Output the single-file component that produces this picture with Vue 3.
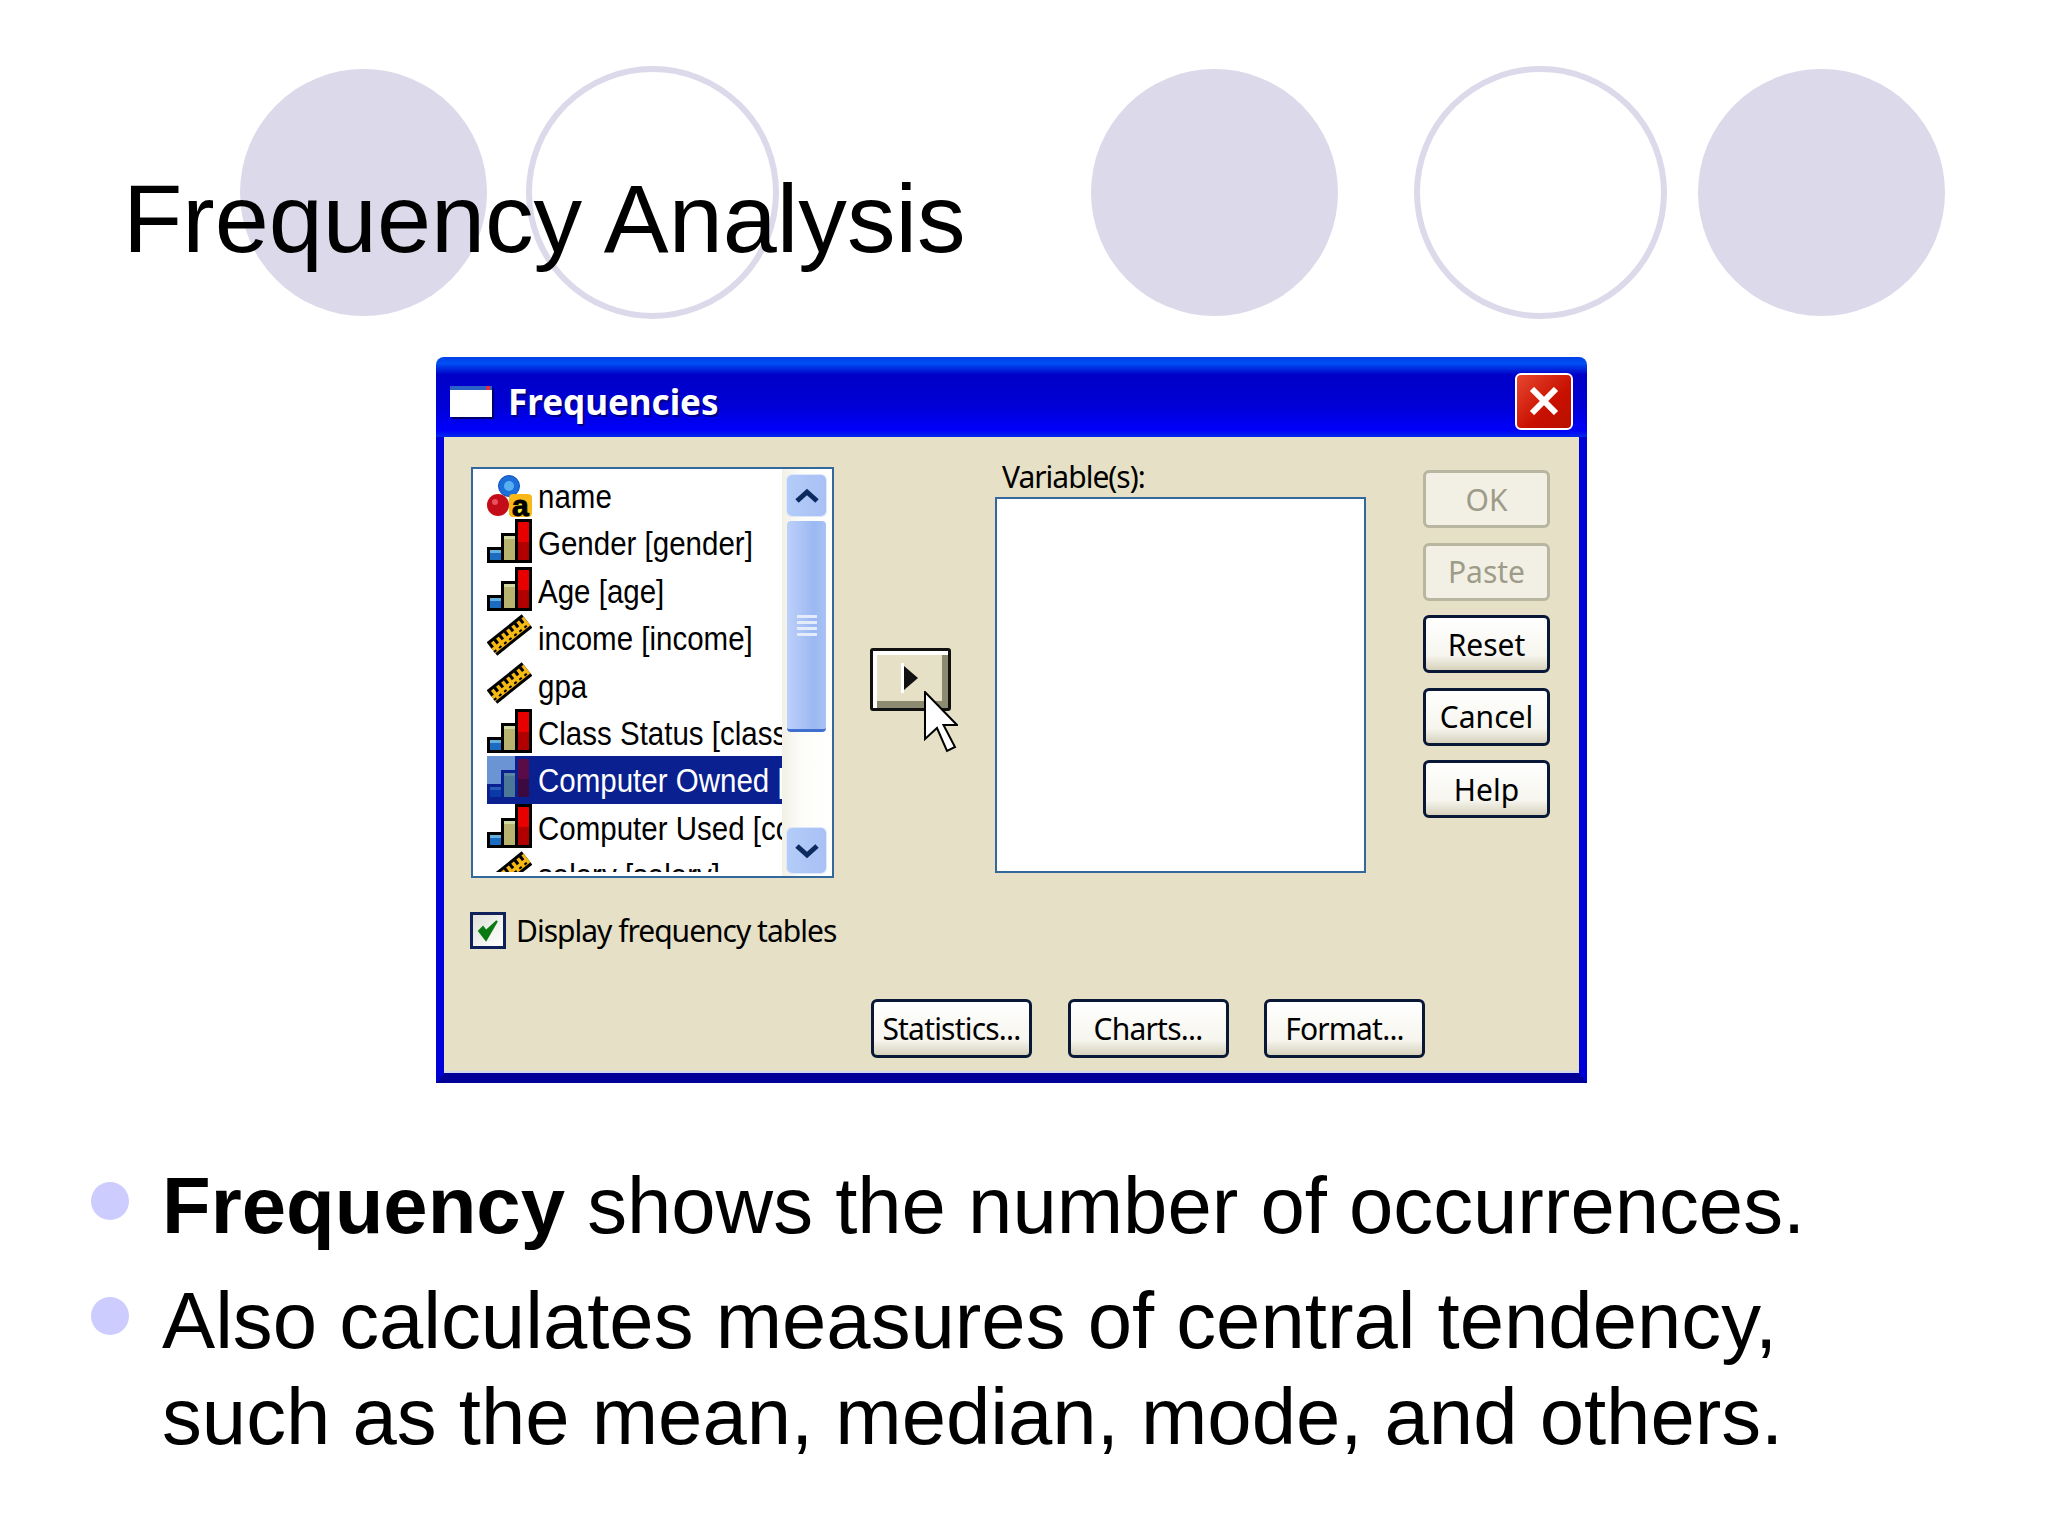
<script setup>
const bar = { outline: '#000', blue: '#1a6cc0', blueTop: '#66b0e0', tan: '#b8b470', tanTop: '#d0d8a0', red: '#e80000', redDark: '#b00000', bg: 'none' }
const barSel = { outline: '#0a1f90', blue: '#0a3aa8', blueTop: '#2a5ab8', tan: '#4a7896', tanTop: '#5a88a0', red: '#5a0c48', redDark: '#3c0a40', bg: '#6a94d4' }
const rows = [
  { id: 1, icon: 'name', label: 'name' },
  { id: 2, icon: 'bar', label: 'Gender [gender]' },
  { id: 3, icon: 'bar', label: 'Age [age]' },
  { id: 4, icon: 'ruler', label: 'income [income]' },
  { id: 5, icon: 'ruler', label: 'gpa' },
  { id: 6, icon: 'bar', label: 'Class Status [class]' },
  { id: 7, icon: 'bar', label: 'Computer Owned [comp]', selected: true },
  { id: 8, icon: 'bar', label: 'Computer Used [comp]' },
  { id: 9, icon: 'ruler', label: 'salary [salary]' }
]
const sideButtons = [
  { label: 'OK', disabled: true },
  { label: 'Paste', disabled: true },
  { label: 'Reset' },
  { label: 'Cancel' },
  { label: 'Help' }
]
const bottomButtons = ['Statistics...', 'Charts...', 'Format...']
const colors = (row) => (row.selected ? barSel : bar)
</script>

<template>
  <div class="slide">
    <div class="decor">
      <span class="disc"></span>
      <span class="ring r1"></span>
      <span class="disc d2"></span>
      <span class="ring r2"></span>
      <span class="disc d3"></span>
    </div>

    <h1 class="title">Frequency Analysis</h1>

    <section class="dialog">
      <header class="titlebar">
        <span class="winicon"><i class="windot"></i></span>
        <span class="wintitle">Frequencies</span>
        <span class="close">
          <svg width="30" height="28" viewBox="0 0 30 28"><path d="M3 2 L27 26 M27 2 L3 26" stroke="#fff" stroke-width="6" fill="none" /></svg>
        </span>
      </header>

      <div class="body">
        <div class="top">
          <div class="listbox">
            <div class="items">
              <div v-for="row in rows" :key="row.id" class="row" :class="{ selected: row.selected }">
                <svg v-if="row.icon === 'bar'" class="icon" width="45" height="44" viewBox="0 0 45 44">
                  <rect width="45" height="47" :fill="colors(row).bg" />
                  <rect x="0" y="28" width="17" height="16" :fill="colors(row).outline" />
                  <rect x="14" y="14" width="17" height="30" :fill="colors(row).outline" />
                  <rect x="28" y="0" width="17" height="44" :fill="colors(row).outline" />
                  <rect x="3" y="31" width="11" height="10" :fill="colors(row).blue" />
                  <rect x="3" y="31" width="11" height="3" :fill="colors(row).blueTop" />
                  <rect x="17" y="17" width="11" height="24" :fill="colors(row).tan" />
                  <rect x="17" y="17" width="11" height="3" :fill="colors(row).tanTop" />
                  <rect x="31" y="3" width="11" height="38" :fill="colors(row).redDark" />
                  <rect x="31" y="3" width="11" height="20" :fill="colors(row).red" />
                </svg>
                <svg v-else-if="row.icon === 'ruler'" class="icon" width="45" height="44" viewBox="0 0 45 44">
                  <path d="M5 35 L40 7" stroke="#000" stroke-width="17" fill="none" />
                  <path d="M5 35 L40 7" stroke="#f6b812" stroke-width="11" fill="none" />
                  <path d="M3 32.5 L38 4.5" stroke="#000" stroke-width="5" stroke-dasharray="3 3.5" fill="none" />
                  <path d="M7 38 L42 10" stroke="#000" stroke-width="2" stroke-dasharray="3 3.5" fill="none" />
                </svg>
                <svg v-else class="icon nameicon" width="45" height="44" viewBox="0 0 45 44">
                  <circle cx="22" cy="11" r="10.5" fill="#1c6ed8" stroke="#1050c0" stroke-width="1" />
                  <circle cx="22" cy="11" r="5" fill="#58b0f0" />
                  <circle cx="11" cy="30" r="11" fill="#c40c18" />
                  <circle cx="8" cy="27" r="3" fill="#e85060" />
                  <rect x="22" y="19" width="23" height="23" rx="4" fill="#f8b818" />
                  <rect x="29" y="29" width="11" height="11" fill="#f8f040" />
                  <text x="25" y="41" class="glyph">a</text>
                </svg>
                <span class="label">{{ row.label }}</span>
              </div>
            </div>
            <div class="scroll">
              <div class="sbtn up">
                <svg width="26" height="16" viewBox="0 0 26 16"><path d="M3 13 L13 4 L23 13" fill="none" stroke="#0c2a60" stroke-width="5" /></svg>
              </div>
              <div class="thumb">
                <span class="grip"></span><span class="grip"></span><span class="grip"></span><span class="grip"></span>
              </div>
              <div class="spacer"></div>
              <div class="sbtn down">
                <svg width="26" height="16" viewBox="0 0 26 16"><path d="M3 3 L13 12 L23 3" fill="none" stroke="#0c2a60" stroke-width="5" /></svg>
              </div>
            </div>
          </div>

          <div class="move">
            <svg width="18" height="30" viewBox="0 0 18 30"><path d="M0 0 L3 0 L3 30 L0 30 Z" fill="#fff" /><path d="M3 3 L17 15 L3 27 Z" fill="#111" /></svg>
          </div>

          <div class="varcol">
            <div class="varlabel">Variable(s):</div>
            <div class="varbox"></div>
          </div>

          <div class="sidebtns">
            <button v-for="b in sideButtons" :key="b.label" class="btn" :class="{ disabled: b.disabled }">{{ b.label }}</button>
          </div>
        </div>

        <div class="check">
          <span class="box">
            <svg width="24" height="24" viewBox="0 0 24 24"><path d="M3 12 L10 21 L21 2 L10 12 L7 8 Z" fill="#0a7a12" stroke="#0a7a12" stroke-width="2" /></svg>
          </span>
          <span class="checklabel">Display frequency tables</span>
        </div>

        <div class="bottom">
          <button v-for="b in bottomButtons" :key="b" class="btn wide">{{ b }}</button>
        </div>
      </div>

      <svg class="cursor" width="34" height="62" viewBox="-1 -1 34 62">
        <path d="M0 0 L0 47 L12 36 L22 59 L30 55 L18.5 33 L32 33 Z" fill="#fff" stroke="#000" stroke-width="2" />
      </svg>
    </section>

    <ul class="bullets">
      <li><span class="dot"></span><span class="text"><b>Frequency</b> shows the number of occurrences.</span></li>
      <li class="second"><span class="dot"></span><span class="text">Also calculates measures of central tendency, such as the mean, median, mode, and others.</span></li>
    </ul>
  </div>
</template>

<style scoped>
.slide { position: relative; width: 2048px; height: 1536px; overflow: hidden; background: #fff; color: #000; font-family: "Liberation Sans", Arial, sans-serif; }
.decor { position: absolute; left: 240px; top: 65px; height: 254px; display: flex; align-items: center; }
.disc { width: 247px; height: 247px; border-radius: 50%; background: #dbd9ea; flex: none; }
.ring { width: 253px; height: 253px; border-radius: 50%; border: 6px solid #dbd9ea; box-sizing: border-box; flex: none; }
.r1 { margin-left: 39px; }
.d2 { margin-left: 312px; }
.r2 { margin-left: 76px; }
.d3 { margin-left: 31px; }
.title { position: relative; margin: 164px 0 0; padding-left: 123px; font-size: 97.2px; line-height: 110px; font-weight: 400; }

.dialog { position: relative; margin: 83px 0 0 436px; width: 1151px; height: 726px; display: flex; flex-direction: column; font-family: "Noto Sans", sans-serif; }
.titlebar { height: 80px; flex: none; display: flex; align-items: center; padding: 8px 14px 0; box-sizing: border-box; border-radius: 8px 8px 0 0; background: linear-gradient(180deg, #0040e8 0, #0050f4 8%, #0000c8 22%, #0000d4 60%, #0000fc 92%, #0028e8 100%); }
.winicon { position: relative; width: 42px; height: 31px; background: #fff; border-top: 4px solid #2c62c8; box-sizing: border-box; box-shadow: 2px 2px 0 #00006a; }
.windot { position: absolute; right: 2px; top: -4px; width: 4px; height: 4px; background: #e03040; }
.wintitle { margin-left: 16px; color: #fff; font-size: 35px; font-weight: 700; text-shadow: 2px 2px 0 #000080; }
.close { margin-left: auto; width: 58px; height: 57px; box-sizing: border-box; border: 2px solid #fff; border-radius: 6px; background: linear-gradient(135deg, #e84830, #c81000 60%, #b81000); display: flex; align-items: center; justify-content: center; }

.body { flex: 1; background: #e6e0c6; border: solid #0000d8; border-width: 0 8px 10px; border-bottom-color: #000098; padding: 30px 0 0 27px; box-shadow: inset 0 -2px 0 #d4d8ec; }
.top { display: flex; align-items: flex-start; }
.listbox { width: 363px; height: 411px; box-sizing: border-box; border: 2px solid #33689c; background: #fff; display: flex; overflow: hidden; flex: none; }
.items { width: 309px; height: 403px; flex: none; padding: 3px 0 0 14px; box-sizing: border-box; overflow: hidden; }
.row { height: 47.4px; display: flex; align-items: flex-start; white-space: nowrap; color: #000; font-family: "Liberation Sans", sans-serif; }
.row.selected { background: #0a1f90; color: #fff; }
.icon { flex: none; display: block; }
.nameicon { margin-top: 3px; }
.glyph { font-family: "Liberation Sans", sans-serif; font-size: 30px; font-weight: 700; fill: #000; stroke: #000; stroke-width: 1px; }
.label { display: inline-block; margin-left: 6px; padding-top: 4px; font-size: 29.5px; line-height: 44px; transform: scaleY(1.15); transform-origin: 0 36px; }
.scroll { width: 48px; flex: none; padding: 6px 4px 3px 5px; box-sizing: border-box; display: flex; flex-direction: column; background: linear-gradient(90deg, #f2f0e6, #fcfcf8 40%, #fff); }
.sbtn { height: 41px; flex: none; display: flex; align-items: center; justify-content: center; border-radius: 5px; background: linear-gradient(90deg, #b4ccf8, #a8c0f4); box-shadow: 0 0 0 1px #dfe8fa; }
.sbtn.down { height: 45px; }
.thumb { height: 211px; flex: none; margin-top: 5px; border-radius: 4px; background: linear-gradient(90deg, #bcd0fa, #9cb8f2 70%, #a8c2f4); border-bottom: 3px solid #3f70d0; box-sizing: border-box; display: flex; flex-direction: column; justify-content: center; align-items: center; gap: 3px; }
.grip { width: 20px; height: 3px; background: #e4ecfc; }
.spacer { flex: 1; }
.move { margin: 181px 0 0 36px; width: 81px; height: 63px; box-sizing: border-box; border: 3px solid #111; border-radius: 3px; background: #e6e0c6; box-shadow: inset 4px 4px 0 #fff, inset -6px -7px 0 #8c8a70; display: flex; align-items: center; padding: 0 0 3px 28px; flex: none; }
.varcol { margin-left: 44px; width: 371px; flex: none; }
.varlabel { height: 30px; padding-left: 7px; font-size: 30px; letter-spacing: -1px; line-height: 20px; color: #000; white-space: nowrap; }
.varbox { height: 376px; box-sizing: border-box; border: 2px solid #33689c; background: #fff; }
.sidebtns { margin: 3px 0 0 57px; width: 127px; display: flex; flex-direction: column; gap: 14.6px; }
.btn { height: 58px; padding: 0; box-sizing: border-box; border: 3px solid #0a1838; border-radius: 6px; background: linear-gradient(180deg, #fff, #f6f5ee 72%, #d6d2bc); color: #000; font-family: "Noto Sans", sans-serif; font-size: 30px; text-align: center; }
.btn.disabled { border-color: #b8b5a0; background: #f2f0e4; color: #9e9c88; }
.btn.wide { width: 161px; height: 59px; letter-spacing: -0.8px; }
.check { display: flex; align-items: center; margin-top: 34px; height: 37px; }
.box { width: 36px; height: 37px; box-sizing: border-box; border: 3px solid #10205a; background: linear-gradient(135deg, #e0e0d8, #fff); display: flex; align-items: center; justify-content: center; flex: none; margin-left: -1px; }
.checklabel { margin-left: 10px; font-size: 30px; letter-spacing: -1px; line-height: 37px; color: #000; white-space: nowrap; }
.bottom { display: flex; gap: 35.5px; margin: 50px 0 0 400px; }
.cursor { position: absolute; left: 488px; top: 334px; }

.bullets { list-style: none; margin: 75px 0 0; padding: 0 0 0 91px; font-size: 79.7px; line-height: 96px; }
.bullets li { display: flex; align-items: flex-start; }
.second { margin-top: 19px; }
.dot { width: 38px; height: 38px; border-radius: 50%; background: #ccccff; flex: none; margin: 24px 33px 0 0; }
.text { width: 1720px; }
</style>
